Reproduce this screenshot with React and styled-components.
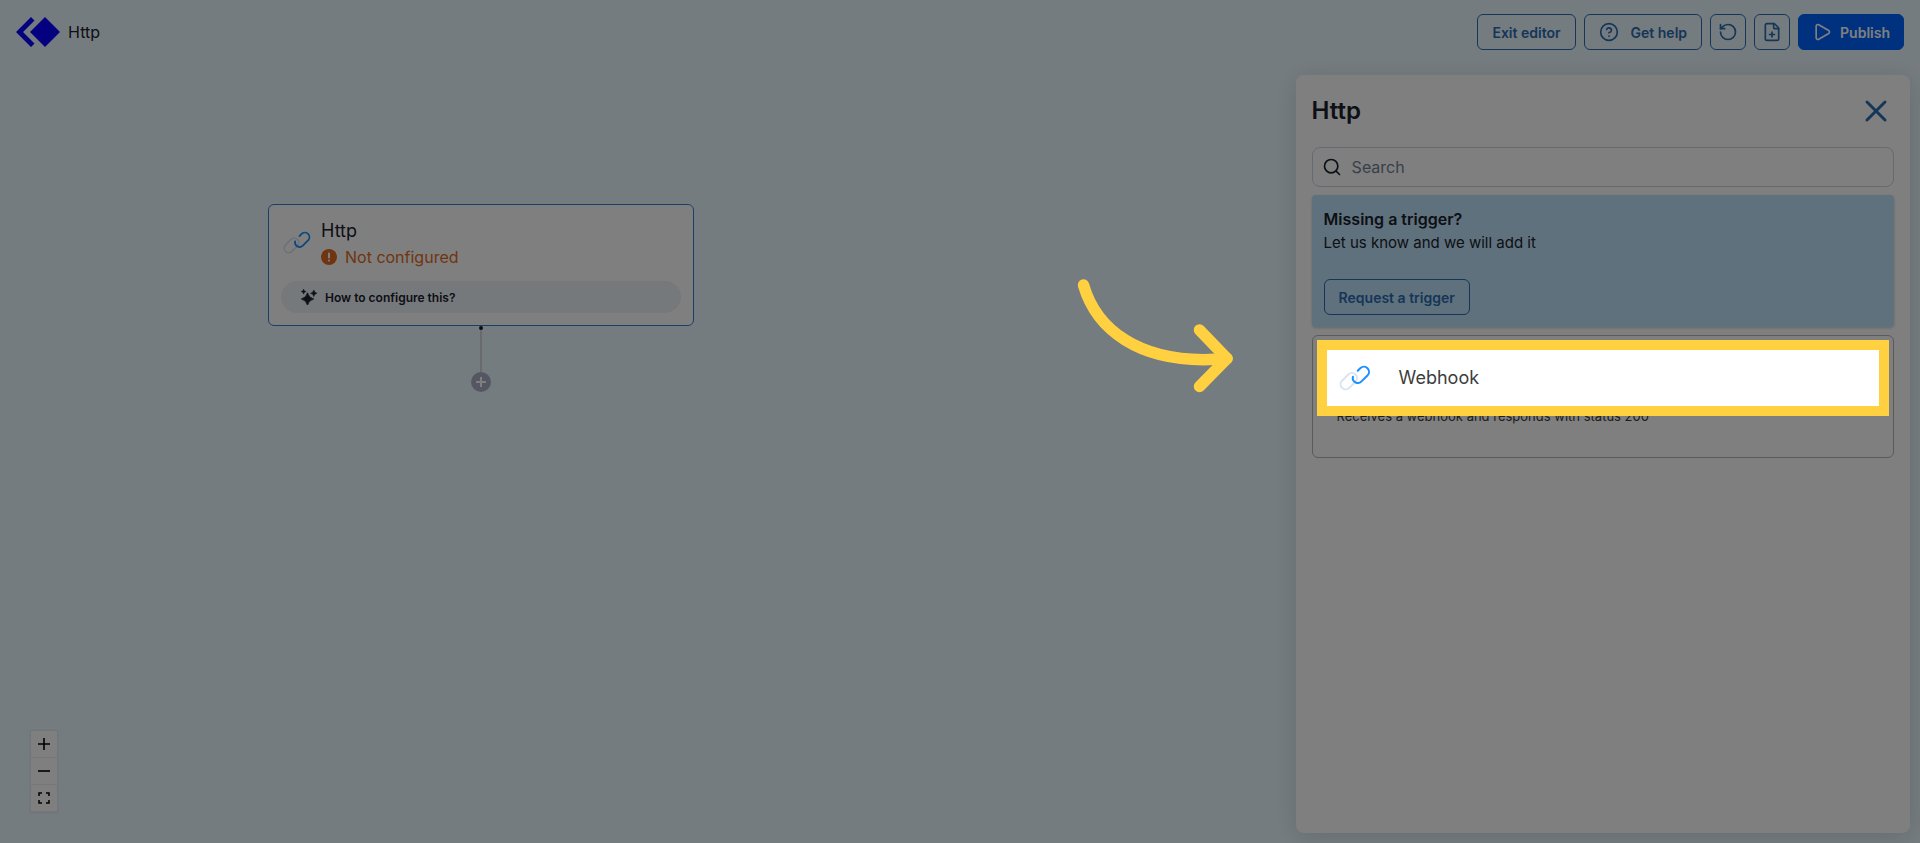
import React from 'react'
import styled, { createGlobalStyle } from 'styled-components'
import { CircleHelp, FilePlus, Play, RotateCcw, Search, X } from 'lucide-react'

const GlobalStyle = createGlobalStyle`
  * {
    box-sizing: border-box;
  }
  body {
    margin: 0;
    background: #ebf8ff;
    color: #1a202c;
    font-family: Inter, 'Liberation Sans', sans-serif;
    font-size: 16px;
    line-height: 24px;
  }
  button, input {
    font-family: inherit;
  }
  h1, h2, h3, p {
    margin: 0;
  }
`

const Page = styled.div`
  display: flex;
  flex-direction: column;
  min-height: 100vh;
  overflow: hidden;
`

const Header = styled.header`
  display: flex;
  align-items: center;
  justify-content: space-between;
  height: 64px;
  padding: 0 16px;
`

const Brand = styled.div`
  display: flex;
  align-items: center;
  gap: 8px;
`

const FlowName = styled.h1`
  font-size: 16px;
  font-weight: 400;
`

const Actions = styled.div`
  display: flex;
  gap: 8px;
`

const Button = styled.button`
  display: inline-flex;
  align-items: center;
  justify-content: center;
  gap: ${props => (props.$primary ? '8px' : '12px')};
  height: 36px;
  padding: 0 ${props => (props.$primary ? '13px' : '14px')};
  border: 1px solid ${props => (props.$primary ? '#0062ff' : '#2b6cb0')};
  border-radius: 6px;
  background: ${props => (props.$primary ? '#0062ff' : 'transparent')};
  color: ${props => (props.$primary ? '#ffffff' : '#2b6cb0')};
  font-size: 14px;
  font-weight: 600;
`

const IconButton = styled(Button)`
  width: 36px;
  padding: 0;
`

const Main = styled.main`
  display: flex;
  flex: 1;
`

const Canvas = styled.section`
  position: relative;
  flex: 1;
`

const FlowNode = styled.div`
  position: absolute;
  top: 140px;
  left: 268px;
  display: flex;
  flex-direction: column;
  align-items: center;
`

const NodeCard = styled.article`
  width: 426px;
  padding: 12px;
  border: 1px solid #3182ce;
  border-radius: 6px;
  background: #ffffff;
`

const NodeHead = styled.div`
  display: flex;
  align-items: center;
  gap: 8px;
  height: 52px;
  margin-bottom: 12px;
`

const NodeTitle = styled.h3`
  font-size: 18px;
  font-weight: 400;
  line-height: 28px;
`

const Status = styled.p`
  display: flex;
  align-items: center;
  gap: 8px;
  color: #dd6b20;
`

const HintButton = styled.button`
  display: flex;
  align-items: center;
  gap: 8px;
  width: 100%;
  height: 32px;
  padding: 0 20px;
  border: 0;
  border-radius: 16px;
  background: #edf2f7;
  color: #1a202c;
  font-size: 12px;
  font-weight: 600;
`

const Handle = styled.span`
  width: 4px;
  height: 4px;
  border-radius: 50%;
  background: #1a192b;
`

const Edge = styled.span`
  width: 2px;
  height: 42px;
  background: #d4d4d8;
`

const AddButton = styled.button`
  display: flex;
  align-items: center;
  justify-content: center;
  width: 20px;
  height: 20px;
  padding: 0;
  border: 0;
  border-radius: 50%;
  background: #a9afc3;
  color: #ffffff;
`

const Controls = styled.div`
  position: absolute;
  bottom: 31px;
  left: 31px;
  box-shadow: 0 0 2px 1px rgba(0, 0, 0, 0.08);
`

const ControlButton = styled.button`
  display: flex;
  align-items: center;
  justify-content: center;
  width: 26px;
  height: 27px;
  padding: 0;
  border: 0;
  border-bottom: 1px solid #eeeeee;
  background: #fefefe;
  color: #000000;
`

const Panel = styled.aside`
  display: flex;
  flex-direction: column;
  gap: 8px;
  width: 32%;
  margin: 11px 10px 10px 0;
  padding: 16px;
  border-radius: 8px;
  background: #ffffff;
  box-shadow: 0 4px 24px rgba(0, 40, 80, 0.14);
`

const PanelHead = styled.div`
  display: flex;
  align-items: center;
  justify-content: space-between;
  height: 40px;
  margin-bottom: 8px;
`

const PanelTitle = styled.h2`
  font-size: 24px;
  font-weight: 600;
  line-height: 32px;
`

const CloseButton = styled.button`
  display: flex;
  padding: 0;
  border: 0;
  background: none;
  color: #2b6cb0;
`

const SearchBox = styled.label`
  display: flex;
  align-items: center;
  gap: 10px;
  height: 40px;
  padding: 0 9px;
  border: 1px solid #cbd5e0;
  border-radius: 8px;
`

const SearchInput = styled.input`
  flex: 1;
  padding: 0;
  border: 0;
  outline: 0;
  background: none;
  font-size: 16px;

  &::placeholder {
    color: #718096;
    opacity: 1;
  }
`

const Banner = styled.section`
  padding: 12px;
  border-radius: 4px;
  background: #bee3f8;
  box-shadow: 0 1px 3px rgba(0, 0, 0, 0.2);

  ${Button} {
    margin-top: 24px;
  }
`

const BannerTitle = styled.h3`
  font-size: 16px;
  font-weight: 600;
`

const BannerText = styled.p`
  font-size: 15px;
`

const TriggerCard = styled.article`
  position: relative;
  height: 123px;
  padding: 24px;
  border: 1px solid #b4b4b4;
  border-radius: 6px;
  color: #3d3d3d;
`

const TriggerHead = styled.div`
  display: flex;
  align-items: center;
  gap: 26px;
  height: 36px;
  margin-bottom: 8px;
`

const TriggerTitle = styled.h3`
  font-size: 18px;
  font-weight: 400;
`

const TriggerText = styled.p`
  font-size: 13px;
`

// The spread shadow dims everything outside the highlighted row
const Spotlight = styled.div`
  position: absolute;
  z-index: 10;
  top: 4px;
  right: 4px;
  left: 4px;
  height: 76px;
  border: 10px solid #ffd140;
  box-shadow: 0 0 0 3000px rgba(0, 0, 0, 0.5);
  pointer-events: none;
`

const Pointer = styled.svg`
  position: absolute;
  top: -75px;
  right: calc(100% + 92px);
`

const Logo = () => (
  <svg width="44" height="30" viewBox="0.5 1 44 30" fill="#0a00ff" aria-hidden="true">
    <path d="M15.5 1 19 4.500 7.500 16 19 27.500 15.500 31 .5 16z" />
    <path d="M29.500 1 44.500 16 29.500 31 14.500 16z" />
  </svg>
)

const LinkIcon = ({ width }) => (
  <svg width={width} viewBox="0 0 36 26" fill="none" strokeWidth="2" strokeLinecap="round" aria-hidden="true">
    <rect x="-9.5" y="-5.1" width="19" height="10.2" rx="5.1" transform="translate(11.800 16.200) rotate(-45)" stroke="#dbe4f3" />
    <path d="M20.700 5.800 23.500 3A5.100 5.100 0 0 1 30.700 10.200L24.500 16.400A5.100 5.100 0 0 1 15.900 11.700" stroke="#1890ff" />
  </svg>
)

const AlertIcon = () => (
  <svg width="16" height="16" viewBox="0 0 16 16" aria-hidden="true">
    <circle cx="8" cy="8" r="8" fill="#dd6b20" />
    <path d="M8 4.500v4" stroke="#fff" strokeWidth="2" strokeLinecap="round" />
    <circle cx="8" cy="11.500" r="1.100" fill="#fff" />
  </svg>
)

const SparkleIcon = () => (
  <svg width="16" height="16" viewBox="0 0 16 16" fill="currentColor" aria-hidden="true">
    <path d="M6.500 3.800Q7.700 8.800 12.700 10 7.700 11.200 6.500 16.200 5.300 11.200.3 10 5.300 8.800 6.500 3.800z" stroke="currentColor" strokeWidth=".8" strokeLinejoin="round" />
    <path d="M12.800 1 13.900 3.300 16 4.300 13.900 5.300 12.800 7.600 11.700 5.300 9.500 4.300 11.700 3.300z" stroke="currentColor" strokeWidth=".5" />
    <path d="M2.600 0 3.400 1.800 5.200 2.600 3.400 3.400 2.600 5.200 1.800 3.400 0 2.600 1.800 1.800z" stroke="currentColor" strokeWidth=".3" />
  </svg>
)

const App = () => (
  <Page>
    <GlobalStyle />
    <Header>
      <Brand>
        <Logo />
        <FlowName>Http</FlowName>
      </Brand>
      <Actions>
        <Button>Exit editor</Button>
        <Button>
          <CircleHelp size={20} strokeWidth={2} />
          Get help
        </Button>
        <IconButton aria-label="History"><RotateCcw size={20} strokeWidth={2} /></IconButton>
        <IconButton aria-label="New file"><FilePlus size={20} strokeWidth={2} /></IconButton>
        <Button $primary>
          <Play size={20} strokeWidth={2} />
          Publish
        </Button>
      </Actions>
    </Header>
    <Main>
      <Canvas>
        <FlowNode>
          <NodeCard>
            <NodeHead>
              <LinkIcon width={32} />
              <div>
                <NodeTitle>Http</NodeTitle>
                <Status><AlertIcon />Not configured</Status>
              </div>
            </NodeHead>
            <HintButton><SparkleIcon />How to configure this?</HintButton>
          </NodeCard>
          <Handle />
          <Edge />
          <AddButton aria-label="Add step">
            <svg width="10" height="10" viewBox="0 0 10 10" stroke="currentColor" strokeWidth="2" aria-hidden="true">
              <path d="M5 0v10M0 5h10" />
            </svg>
          </AddButton>
        </FlowNode>
        <Controls>
          <ControlButton aria-label="Zoom in">
            <svg width="12" height="12" viewBox="0 0 12 12" stroke="currentColor" strokeWidth="1.600" aria-hidden="true">
              <path d="M6 0v12M0 6h12" />
            </svg>
          </ControlButton>
          <ControlButton aria-label="Zoom out">
            <svg width="12" height="12" viewBox="0 0 12 12" stroke="currentColor" strokeWidth="1.600" aria-hidden="true">
              <path d="M0 6h12" />
            </svg>
          </ControlButton>
          <ControlButton aria-label="Fit view">
            <svg width="12" height="12" viewBox="0 0 12 12" fill="none" stroke="currentColor" strokeWidth="1.500" aria-hidden="true">
              <path d="M1 4V1h3M8 1h3v3M11 8v3H8M4 11H1V8" />
            </svg>
          </ControlButton>
        </Controls>
      </Canvas>
      <Panel>
        <PanelHead>
          <PanelTitle>Http</PanelTitle>
          <CloseButton aria-label="Close"><X size={36} strokeWidth={2} /></CloseButton>
        </PanelHead>
        <SearchBox>
          <Search size={20} strokeWidth={2} />
          <SearchInput placeholder="Search" aria-label="Search" />
        </SearchBox>
        <Banner>
          <BannerTitle>Missing a trigger?</BannerTitle>
          <BannerText>Let us know and we will add it</BannerText>
          <Button>Request a trigger</Button>
        </Banner>
        <TriggerCard>
          <TriggerHead>
            <LinkIcon width={36} />
            <TriggerTitle>Webhook</TriggerTitle>
          </TriggerHead>
          <TriggerText>Receives a webhook and responds with status 200</TriggerText>
          <Spotlight>
            <Pointer width="160" height="120" viewBox="0 0 160 120" fill="none" stroke="#ffd140" strokeWidth="11.500" strokeLinecap="round" strokeLinejoin="round" aria-hidden="true">
              <path d="M8.500 10C20 50 60 92 152 83.500" />
              <path d="M124.500 55 152 83.500 124.500 111.500" />
            </Pointer>
          </Spotlight>
        </TriggerCard>
      </Panel>
    </Main>
  </Page>
)

export default App
